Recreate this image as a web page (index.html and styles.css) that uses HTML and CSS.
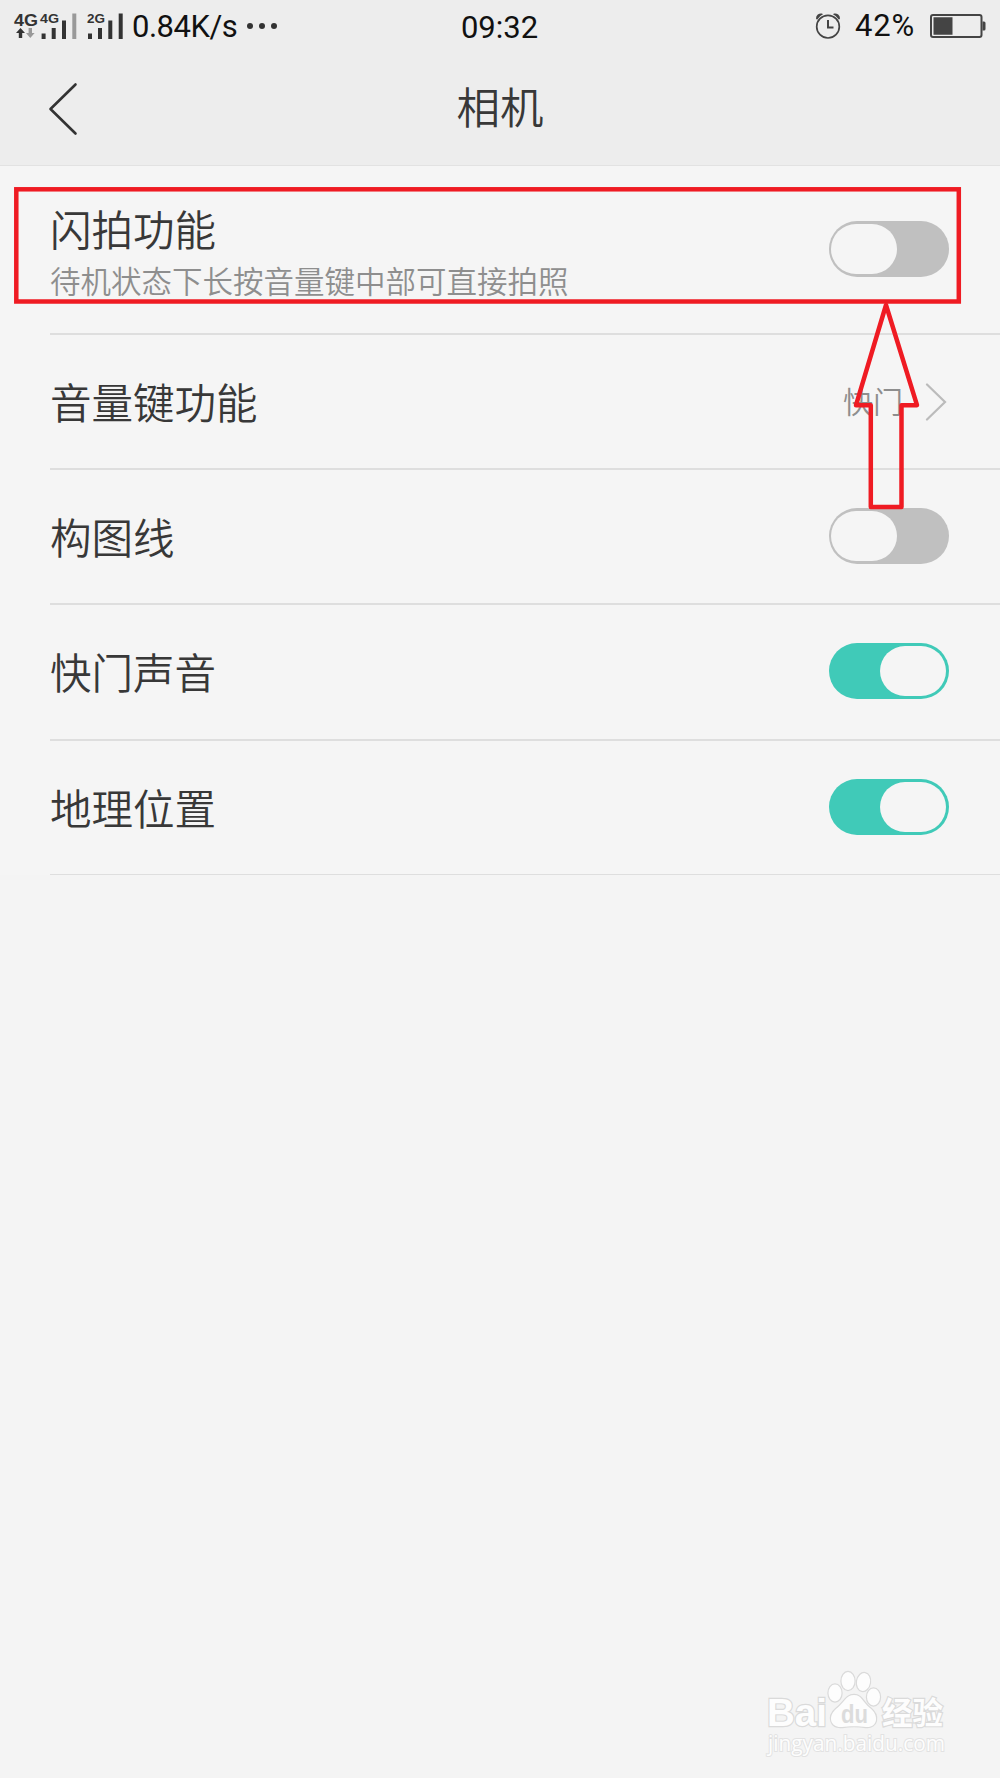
FILE: index.html
```
<!DOCTYPE html>
<html lang="zh-CN">

<head>
    <meta charset="UTF-8">
    <title>相机</title>
    <link rel="stylesheet" href="styles.css">
</head>

<body>
    <div class="page">
        <div class="statusBar">
            <div class="statusLeft">
                <svg class="signal" width="111" height="30" viewBox="13 10 111 30">
                    <g fill="#333">
                        <text class="net" x="14" y="25" font-size="17" textLength="24" lengthAdjust="spacingAndGlyphs">4G</text>
                        <text class="net" x="40" y="22" font-size="13" textLength="19" lengthAdjust="spacingAndGlyphs">4G</text>
                        <text class="net" x="87" y="22" font-size="13" textLength="18" lengthAdjust="spacingAndGlyphs">2G</text>
                        <path d="M20.5 27l4.5 5h-2.8v5h-3.4v-5h-2.8z" />
                        <path d="M41.6 32.5h4v5.5h-4zM51.7 27h4v11h-4zM62 19.5h4v18.5h-4z" />
                        <path d="M88 32.5h4v5.5h-4zM98 27h4v11h-4zM108.3 19.5h4v18.5h-4zM118.7 12.5h4v25.5h-4z" />
                    </g>
                    <g fill="#999">
                        <path d="M30.3 37l4.3-5h-2.6v-5h-3.4v5h-2.6z" />
                        <path d="M72.3 12.5h4v25.5h-4z" />
                    </g>
                </svg>
                <span class="speed">0.84K/s</span>
                <span class="dots"><i></i><i></i><i></i></span>
            </div>
            <span class="time">09:32</span>
            <div class="statusRight">
                <svg width="26" height="28" viewBox="0 0 26 28" fill="none" stroke="#444" stroke-width="1.7">
                    <circle cx="13" cy="14.7" r="11.3" />
                    <path d="M13 8v7.5h5.5" stroke-width="2" />
                    <path d="M1 6.5a5 5 0 0 1 6-5l1 .8a14 14 0 0 0-6 5.4zM25 6.5a5 5 0 0 0-6-5l-1 .8a14 14 0 0 1 6 5.4z" fill="#444" stroke="none" />
                </svg>
                <span class="percent">42%</span>
                <svg width="56" height="24" viewBox="0 0 56 24">
                    <rect x="1" y="1" width="50.5" height="22" rx="2" fill="none" stroke="#444" stroke-width="2" />
                    <path d="M3.5 3.2h19v17.6h-19zM52.5 7.5h1.5q1.5 0 1.5 1.5v6q0 1.5-1.5 1.5h-1.5z" fill="#444" />
                </svg>
            </div>
        </div>
        <div class="titleBar">
            <svg class="back" width="30" height="54" viewBox="0 0 30 54">
                <path d="M27.5 2.5L2.5 27l25 24.5" />
            </svg>
            <h1>相机</h1>
        </div>
        <ul class="list">
            <li class="item first">
                <div class="label">
                    <p class="name">闪拍功能</p>
                    <p class="desc">待机状态下长按音量键中部可直接拍照</p>
                </div>
                <span class="switch"></span>
            </li>
            <li class="item">
                <p class="name">音量键功能</p>
                <div class="value">
                    <span>快门</span>
                    <svg class="more" width="22" height="38" viewBox="0 0 22 38">
                        <path d="M2 1.5L20 19 2 36.5" />
                    </svg>
                </div>
            </li>
            <li class="item">
                <p class="name">构图线</p>
                <span class="switch"></span>
            </li>
            <li class="item">
                <p class="name">快门声音</p>
                <span class="switch on"></span>
            </li>
            <li class="item last">
                <p class="name">地理位置</p>
                <span class="switch on"></span>
            </li>
        </ul>

        <!-- 红框和箭头 -->
        <svg class="mark" width="1000" height="520" viewBox="0 0 1000 520">
            <rect x="16.3" y="189.3" width="942.5" height="112.2" />
            <path d="M886 305L917 405.2H901.5V507H870.8V405.2H856z" stroke-linejoin="round" />
        </svg>

        <!-- 水印 -->
        <svg class="watermark" width="190" height="100" viewBox="0 0 190 100">
            <text class="logo" x="2" y="56" font-size="39" textLength="60" lengthAdjust="spacingAndGlyphs">Bai</text>
            <g class="paw">
                <ellipse cx="70" cy="23" rx="6.5" ry="8.5" />
                <ellipse cx="83" cy="11" rx="6.5" ry="9" />
                <ellipse cx="98.5" cy="12" rx="6.5" ry="9" transform="rotate(10 98.5 12)" />
                <ellipse cx="108.5" cy="27" rx="6.5" ry="8.5" />
                <path d="M89 25C97 25 98 33 105 38C115 46 112 58 101 57C94 56 84 56 77 57C66 58 62 47 71 39C79 33 81 25 89 25z" />
            </g>
            <text class="du" x="76" y="53" font-size="26" textLength="27" lengthAdjust="spacingAndGlyphs">du</text>
            <text class="logo cn" x="117" y="54" font-size="31" textLength="61" lengthAdjust="spacingAndGlyphs">经验</text>
            <text class="url" x="3" y="81" font-size="22" textLength="177" lengthAdjust="spacingAndGlyphs">jingyan.baidu.com</text>
        </svg>
    </div>
</body>

</html>
```
FILE: styles.css
```
* {
    box-sizing: border-box;
    margin: 0;
    padding: 0;
}

body {
    background: #f4f4f4;
    color: #383838;
    font-family: Roboto, "Noto Sans CJK SC", sans-serif;
}

.page {
    position: relative;
    width: 1000px;
    height: 1778px;
    overflow: hidden;
}

/* 状态栏 */
.statusBar {
    display: grid;
    grid-template-columns: 1fr auto 1fr;
    align-items: center;
    height: 52px;
    padding: 0 14px 3px 13px;
    background: #ededed;
    color: #111;
    font-size: 31px;
    line-height: 48px;
}

.statusLeft,
.statusRight {
    display: flex;
    align-items: center;
}

.statusRight {
    justify-content: flex-end;
}

.net {
    font-family: "Liberation Sans", sans-serif;
    font-weight: bold;
}

.speed {
    margin-left: 8px;
    padding-top: 1px;
    letter-spacing: -0.5px;
}

.time {
    padding-top: 4px;
}

.percent {
    margin: 0 15px 0 14px;
    letter-spacing: 0.8px;
}

.dots {
    display: flex;
    gap: 6px;
    margin-left: 10px;
}

.dots i {
    width: 6px;
    height: 6px;
    border-radius: 50%;
    background: #333;
}

/* 标题栏 */
.titleBar {
    display: grid;
    grid-template-columns: 1fr auto 1fr;
    align-items: center;
    height: 114px;
    padding: 0 48px;
    border-bottom: 1px solid #e2e2e2;
    background: #ededed;
}

.titleBar h1 {
    padding-top: 2px;
    font-size: 43.5px;
    font-weight: 350;
    line-height: 111px;
}

.back,
.more,
.mark {
    fill: none;
}

.back {
    stroke: #333;
    stroke-width: 2.6;
    stroke-linecap: round;
    stroke-linejoin: round;
}

/* 设置列表 */
.list {
    list-style: none;
    padding-left: 50px;
    background: #f5f5f5;
    font-weight: 350;
}

.item {
    display: flex;
    align-items: center;
    justify-content: space-between;
    height: 135.2px;
    padding-right: 51px;
    border-bottom: 2px solid #dedede;
}

.first {
    height: 169px;
    padding-bottom: 2px;
}

.last {
    height: 134.4px;
    border-bottom-width: 1px;
}

.name {
    padding-top: 7px;
    font-size: 41.5px;
    line-height: 60px;
}

.label {
    padding-top: 8px;
}

.label .name {
    padding-top: 0;
}

.desc {
    color: #8e8e8e;
    font-size: 30.5px;
    line-height: 42px;
}

.value {
    display: flex;
    align-items: center;
    gap: 22px;
    padding-right: 2px;
    color: #8e8e8e;
    font-size: 30px;
}

.value span {
    padding-bottom: 4px;
}

.more {
    stroke: #bbb;
    stroke-width: 2.2;
    stroke-linecap: round;
}

.switch {
    display: flex;
    width: 120px;
    height: 56px;
    margin-bottom: 1px;
    padding: 3px 3px 3px 2px;
    border-radius: 28px;
    background: #c0c0c0;
}

.first .switch {
    margin-bottom: 0;
}

.switch::after {
    content: "";
    width: 66px;
    height: 50px;
    border-radius: 26px;
    background: #f5f5f5;
}

.on {
    justify-content: flex-end;
    background: #40cab8;
}

.mark {
    position: absolute;
    top: 0;
    left: 0;
    stroke: #ef1b23;
    stroke-width: 4.5;
}

.watermark {
    position: absolute;
    right: 45px;
    bottom: 8px;
    fill: #fdfdfd;
    stroke: #dadada;
    stroke-width: 2.4;
    paint-order: stroke;
}

.logo {
    font-family: "Liberation Sans", sans-serif;
    font-weight: bold;
}

.cn {
    font-family: "Noto Sans CJK SC", sans-serif;
}

.du {
    fill: #dcdcdc;
    stroke: none;
    font-family: "Liberation Sans", sans-serif;
    font-weight: bold;
}

.url {
    stroke: #e2e2e2;
    stroke-width: 2;
    font-family: "Open Sans", sans-serif;
}
```
